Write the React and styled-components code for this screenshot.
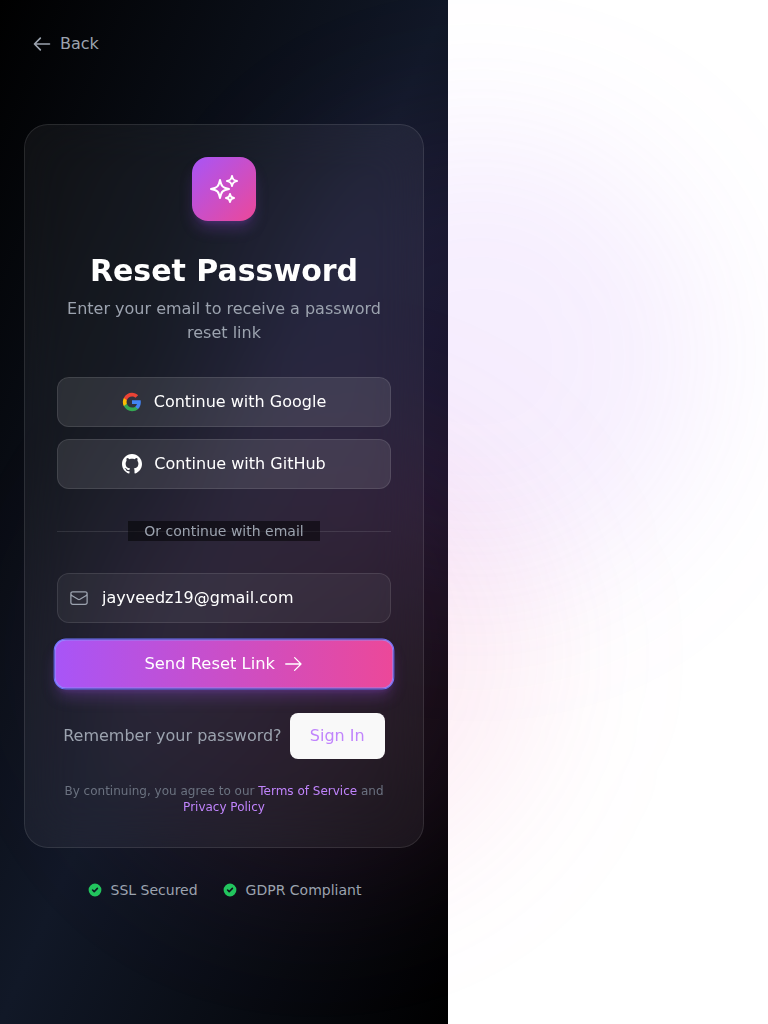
import React from "react";
import styled, { createGlobalStyle } from "styled-components";
import {
  HiOutlineArrowRight,
  HiOutlineEnvelope,
  HiOutlineSparkles,
} from "react-icons/hi2";
import { HiCheckCircle, HiOutlineArrowLeft } from "react-icons/hi";

const GlobalStyle = createGlobalStyle`
  *, *::before, *::after { box-sizing: border-box; }
  html { background: #fff; }
  body {
    margin: 0;
    overflow: hidden;
    font-family: "DejaVu Sans", sans-serif;
    font-size: 16px;
    line-height: 24px;
  }
  button, input { font: inherit; letter-spacing: inherit; }
  p, h1 { margin: 0; }
`;

const Page = styled.main`
  position: relative;
  width: 448px;
  min-height: 1024px;
  padding: 32px 24px;
  display: flex;
  flex-direction: column;
  background: linear-gradient(to bottom right, #000, #111827, #000);
`;

const Glow = styled.div`
  position: absolute;
  left: ${(p) => p.$x}px;
  top: ${(p) => p.$y}px;
  width: 384px;
  height: 384px;
  border-radius: 50%;
  background: ${(p) => p.$color};
  filter: blur(64px);
  transform: scale(1.19);
  pointer-events: none;
`;

const BackLink = styled.button`
  position: relative;
  align-self: flex-start;
  display: flex;
  align-items: center;
  gap: 8px;
  margin-left: 8px;
  padding: 0;
  border: 0;
  background: none;
  color: #9ca3af;
`;

const Card = styled.section`
  position: relative;
  margin-top: 68px;
  padding: 32px;
  border: 1px solid rgba(255, 255, 255, 0.1);
  border-radius: 24px;
  background: rgba(255, 255, 255, 0.052);
  backdrop-filter: blur(24px);
  display: flex;
  flex-direction: column;
`;

const Badge = styled.div`
  align-self: center;
  display: grid;
  place-items: center;
  width: 64px;
  height: 64px;
  margin-bottom: 32px;
  border-radius: 16px;
  color: #fff;
  background: linear-gradient(to bottom right, #a855f7, #ec4899);
  box-shadow: 0 10px 15px -3px rgba(168, 85, 247, 0.25), 0 4px 6px -4px rgba(168, 85, 247, 0.25);
`;

const Title = styled.h1`
  margin-bottom: 8px;
  font-size: 30px;
  line-height: 36px;
  font-weight: 700;
  color: #fff;
  text-align: center;
`;

const Subtitle = styled.p`
  color: #9ca3af;
  text-align: center;
`;

const SocialList = styled.div`
  display: flex;
  flex-direction: column;
  gap: 12px;
  margin: 32px 0;
`;

const SocialButton = styled.button`
  display: flex;
  align-items: center;
  justify-content: center;
  gap: 12px;
  height: 50px;
  padding: 0 16px;
  border: 1px solid rgba(255, 255, 255, 0.1);
  border-radius: 12px;
  background: rgba(255, 255, 255, 0.1);
  color: #fff;
`;

const Divider = styled.div`
  display: flex;
  justify-content: center;
  margin-bottom: 32px;
  background: linear-gradient(rgba(255, 255, 255, 0.1), rgba(255, 255, 255, 0.1)) 0 10px / 100% 1px no-repeat;
`;

const DividerLabel = styled.span`
  padding: 0 16px;
  background: rgba(0, 0, 0, 0.5);
  color: #9ca3af;
  font-size: 14px;
  line-height: 20px;
`;

const Form = styled.form`
  display: flex;
  flex-direction: column;
  gap: 16px;
  margin-bottom: 24px;
`;

const Field = styled.label`
  display: flex;
  align-items: center;
  gap: 13px;
  height: 50px;
  padding: 0 11px;
  border: 1px solid rgba(255, 255, 255, 0.1);
  border-radius: 12px;
  background: rgba(255, 255, 255, 0.05);
  color: #9ca3af;
`;

const Input = styled.input`
  flex: 1;
  min-width: 0;
  padding: 0;
  border: 0;
  outline: 0;
  background: none;
  color: #fff;
`;

const SubmitButton = styled.button`
  display: flex;
  align-items: center;
  justify-content: center;
  gap: 8px;
  height: 50px;
  border: 1px solid #6c74ff;
  border-radius: 12px;
  background: linear-gradient(to right, #a855f7, #ec4899);
  box-shadow:
    inset 0 0 0 1px rgba(140, 150, 255, 0.75),
    0 10px 15px -3px rgba(168, 85, 247, 0.25),
    0 4px 6px -4px rgba(168, 85, 247, 0.25);
  color: #fff;
  transform: scale(1.02);
`;

const SignInRow = styled.div`
  display: flex;
  align-items: center;
  justify-content: center;
  gap: 8px;
  margin-bottom: 24px;
  color: #9ca3af;
`;

const SignInButton = styled.button`
  height: 46px;
  padding: 0 19.2px;
  border: 1px solid transparent;
  border-radius: 8px;
  background: #f9f9f9;
  color: #c084fc;
`;

const Terms = styled.p`
  font-size: 12px;
  line-height: 16px;
  color: #6b7280;
  text-align: center;
`;

const TermsLink = styled.a`
  color: #c084fc;
`;

const TrustRow = styled.footer`
  position: relative;
  display: flex;
  justify-content: center;
  gap: 24px;
  margin-top: 32px;
`;

const TrustItem = styled.div`
  display: flex;
  align-items: center;
  gap: 8px;
  font-size: 14px;
  line-height: 20px;
  color: #9ca3af;

  svg { color: #22c55e; }
`;

const GoogleIcon = () => (
  <svg width="20" height="20" viewBox="0 0 24 24">
    <path fill="#4285F4" d="M22.56 12.25c0-.78-.07-1.53-.2-2.25H12v4.26h5.92c-.26 1.37-1.04 2.53-2.21 3.31v2.77h3.57c2.08-1.92 3.28-4.74 3.28-8.09z" />
    <path fill="#34A853" d="M12 23c2.97 0 5.46-.98 7.28-2.66l-3.57-2.77c-.98.66-2.23 1.06-3.71 1.06-2.86 0-5.29-1.93-6.16-4.53H2.18v2.84C3.99 20.53 7.7 23 12 23z" />
    <path fill="#FBBC05" d="M5.84 14.09c-.22-.66-.35-1.36-.35-2.09s.13-1.43.35-2.09V7.07H2.18C1.43 8.55 1 10.22 1 12s.43 3.45 1.18 4.93l2.85-2.22.81-.62z" />
    <path fill="#EA4335" d="M12 5.38c1.62 0 3.06.56 4.21 1.64l3.15-3.15C17.45 2.09 14.97 1 12 1 7.7 1 3.99 3.47 2.18 7.07l3.66 2.84c.87-2.6 3.3-4.53 6.16-4.53z" />
  </svg>
);

const GitHubIcon = () => (
  <svg width="20" height="20" viewBox="0 0 24 24" fill="currentColor">
    <path d="M12 0c-6.626 0-12 5.373-12 12 0 5.302 3.438 9.8 8.207 11.387.599.111.793-.261.793-.577v-2.234c-3.338.726-4.033-1.416-4.033-1.416-.546-1.387-1.333-1.756-1.333-1.756-1.089-.745.083-.729.083-.729 1.205.084 1.839 1.237 1.839 1.237 1.07 1.834 2.807 1.304 3.492.997.107-.775.418-1.305.762-1.604-2.665-.305-5.467-1.334-5.467-5.931 0-1.311.469-2.381 1.236-3.221-.124-.303-.535-1.524.117-3.176 0 0 1.008-.322 3.301 1.23.957-.266 1.983-.399 3.003-.404 1.02.005 2.047.138 3.006.404 2.291-1.552 3.297-1.23 3.297-1.23.653 1.653.242 2.874.118 3.176.77.84 1.235 1.911 1.235 3.221 0 4.609-2.807 5.624-5.479 5.921.43.372.823 1.102.823 2.222v3.293c0 .319.192.694.801.576 4.765-1.589 8.199-6.086 8.199-11.386 0-6.627-5.373-12-12-12z" />
  </svg>
);

export default function App() {
  return (
    <>
      <GlobalStyle />
      <Page>
        <Glow $x={286} $y={165} $color="rgba(168, 85, 247, 0.1)" />
        <Glow $x={125} $y={463} $color="rgba(236, 72, 153, 0.095)" />
        <BackLink type="button">
          <HiOutlineArrowLeft size={20} />
          Back
        </BackLink>
        <Card>
          <Badge>
            <HiOutlineSparkles size={32} />
          </Badge>
          <Title>Reset Password</Title>
          <Subtitle>Enter your email to receive a password reset link</Subtitle>
          <SocialList>
            <SocialButton type="button">
              <GoogleIcon />
              Continue with Google
            </SocialButton>
            <SocialButton type="button">
              <GitHubIcon />
              Continue with GitHub
            </SocialButton>
          </SocialList>
          <Divider>
            <DividerLabel>Or continue with email</DividerLabel>
          </Divider>
          <Form onSubmit={(e) => e.preventDefault()}>
            <Field>
              <HiOutlineEnvelope size={20} />
              <Input type="email" aria-label="Email" defaultValue="jayveedz19@gmail.com" />
            </Field>
            <SubmitButton type="submit">
              Send Reset Link
              <HiOutlineArrowRight size={20} />
            </SubmitButton>
          </Form>
          <SignInRow>
            Remember your password?
            <SignInButton type="button">Sign In</SignInButton>
          </SignInRow>
          <Terms>
            By continuing, you agree to our <TermsLink>Terms of Service</TermsLink> and{" "}
            <TermsLink>Privacy Policy</TermsLink>
          </Terms>
        </Card>
        <TrustRow>
          <TrustItem>
            <HiCheckCircle size={16} />
            SSL Secured
          </TrustItem>
          <TrustItem>
            <HiCheckCircle size={16} />
            GDPR Compliant
          </TrustItem>
        </TrustRow>
      </Page>
    </>
  );
}
